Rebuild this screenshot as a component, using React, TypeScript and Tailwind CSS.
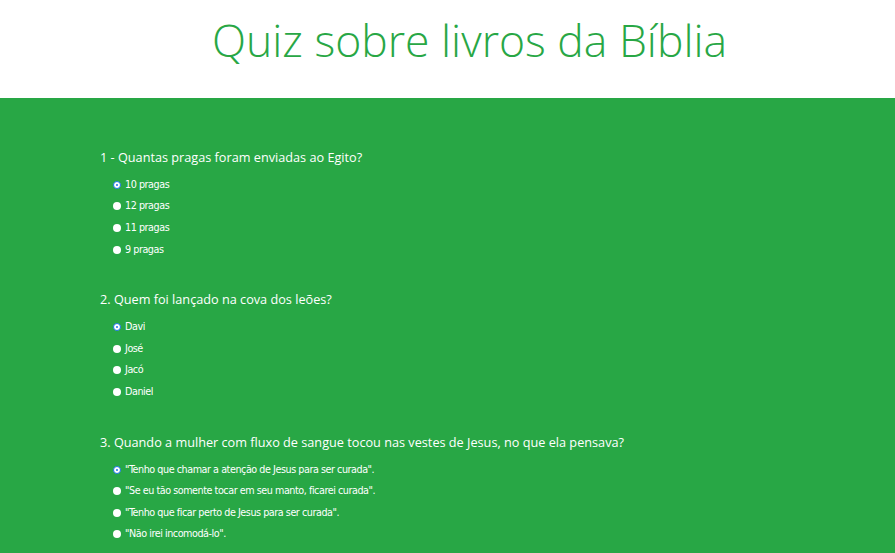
import React from 'react';

type Question = {
  title: string;
  options: string[];
};

const questions: Question[] = [
  {
    title: '1 - Quantas pragas foram enviadas ao Egito?',
    options: ['10 pragas', '12 pragas', '11 pragas', '9 pragas'],
  },
  {
    title: '2. Quem foi lançado na cova dos leões?',
    options: ['Davi', 'José', 'Jacó', 'Daniel'],
  },
  {
    title: '3. Quando a mulher com fluxo de sangue tocou nas vestes de Jesus, no que ela pensava?',
    options: [
      '"Tenho que chamar a atenção de Jesus para ser curada".',
      '"Se eu tão somente tocar em seu manto, ficarei curada".',
      '"Tenho que ficar perto de Jesus para ser curada".',
      '"Não irei incomodá-lo".',
    ],
  },
];

const Radio = ({ checked }: { checked: boolean }) => (
  <span
    className={`w-[8px] h-[8px] rounded-full bg-white flex items-center justify-center ${
      checked ? 'border-[1.5px] border-[#1a73e8]' : ''
    }`}
  >
    {checked && <span className="w-[2px] h-[2px] rounded-full bg-[#1a73e8]" />}
  </span>
);

const QuestionBlock = ({ q }: { q: Question }) => (
  <div className="mb-[29px]">
    <p className="h-[20px] leading-[20px] text-[12.7px] text-white font-['Open_Sans',sans-serif]">
      {q.title}
    </p>
    <ul className="mt-[7px] pl-[13px]">
      {q.options.map((opt, i) => (
        <li key={opt} className="h-[21.6px] flex items-center gap-[4px]">
          <Radio checked={i === 0} />
          <span className="text-[10.7px] text-white font-['DejaVu_Sans_Condensed','DejaVu_Sans',sans-serif] tracking-[-0.45px]">
            {opt}
          </span>
        </li>
      ))}
    </ul>
  </div>
);

export default function App() {
  return (
    <div className="min-h-[553px] bg-[#28a745]">
      <header className="h-[98px] bg-white pl-[212px] pt-[10px]">
        <h1 className="text-[44.5px] leading-[60px] font-light text-[#28a745] font-['Open_Sans',sans-serif]">
          Quiz sobre livros da Bíblia
        </h1>
      </header>
      <main className="pt-[49px] pl-[100px]">
        {questions.map((q) => (
          <QuestionBlock key={q.title} q={q} />
        ))}
      </main>
    </div>
  );
}
